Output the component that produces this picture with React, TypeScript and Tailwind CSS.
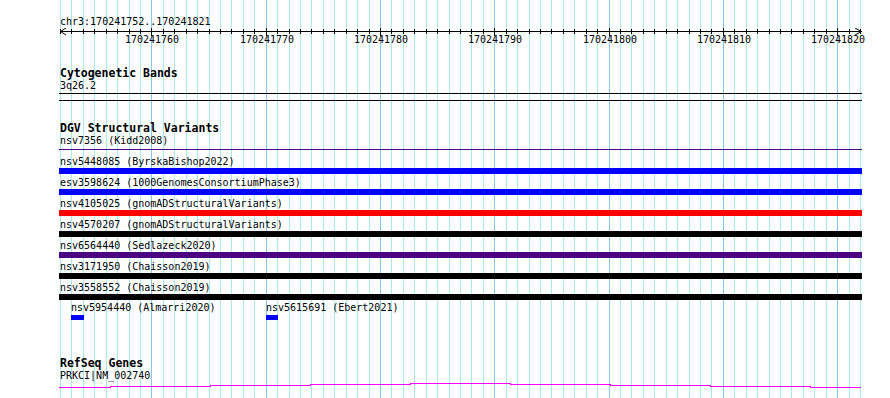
import React from "react";

const START = 170241752;
const BP = 800 / 70;
const xOf = (k: number) => Math.round(60 + k * BP);

const ticks = Array.from({ length: 71 }, (_, k) => ({
  k,
  x: xOf(k),
  major: (START + k) % 10 === 0,
}));

type Variant = { label: string; color: string };

const variants: Variant[] = [
  { label: "nsv5448085 (ByrskaBishop2022)", color: "bg-[#0000ff]" },
  { label: "esv3598624 (1000GenomesConsortiumPhase3)", color: "bg-[#0000ff]" },
  { label: "nsv4105025 (gnomADStructuralVariants)", color: "bg-[#ff0000]" },
  { label: "nsv4570207 (gnomADStructuralVariants)", color: "bg-black" },
  { label: "nsv6564440 (Sedlazeck2020)", color: "bg-[#4b0082]" },
  { label: "nsv3171950 (Chaisson2019)", color: "bg-black" },
  { label: "nsv3558552 (Chaisson2019)", color: "bg-black" },
];

// gene track wiggle: [x1, x2, row]
const wiggle: [number, number, number][] = [
  [59, 110, 5],
  [110, 210, 4],
  [210, 310, 3],
  [310, 410, 2],
  [410, 510, 1],
  [510, 610, 2],
  [610, 710, 3],
  [710, 810, 4],
  [810, 861, 5],
];

function Ruler() {
  return (
    <div className="relative h-[18px] w-[890px]">
      <svg width="890" height="8" className="block" shapeRendering="crispEdges">
        <line x1="60" y1="3.5" x2="862" y2="3.5" stroke="#000" />
        {ticks.map((t) => (
          <line
            key={t.k}
            x1={t.x + 0.5}
            x2={t.x + 0.5}
            y1={t.major ? 0 : 1}
            y2={t.major ? 8 : 6}
            stroke="#000"
          />
        ))}
        <polyline points="66,0 60.5,3.5 66,7" fill="none" stroke="#000" shapeRendering="auto" />
        <polyline points="855,0 861.5,3.5 855,7" fill="none" stroke="#000" shapeRendering="auto" />
      </svg>
      {ticks
        .filter((t) => t.major)
        .map((t) => (
          <div
            key={t.k}
            className="absolute top-[6px] h-[12px] w-[60px] text-center leading-[12px]"
            style={{ left: t.x - 29 }}
          >
            {START + t.k}
          </div>
        ))}
    </div>
  );
}

function TrackLabel({ children, h = "h-[14px] leading-[14px]" }: { children: React.ReactNode; h?: string }) {
  return <div className={`pl-[60px] text-[11.5px] font-bold ${h}`}>{children}</div>;
}

export default function App() {
  return (
    <div className="relative h-[398px] w-[890px] overflow-hidden bg-white font-['DejaVu_Sans_Mono','Liberation_Mono',monospace] text-[10px] text-black">
      {/* grid lines behind all tracks */}
      <div className="absolute inset-0">
        {ticks.map((t) => (
          <div
            key={t.k}
            className={`absolute top-0 h-full w-px ${t.major ? "bg-[#84c8e6]" : "bg-[#aae8ee]"}`}
            style={{ left: t.x }}
          />
        ))}
      </div>

      <div className="relative flex flex-col pt-[16px]">
        <div className="h-[12px] pl-[60px] leading-[12px]">chr3:170241752..170241821</div>
        <Ruler />

        {/* Cytogenetic Bands */}
        <div className="mt-[20px]">
          <TrackLabel>Cytogenetic Bands</TrackLabel>
          <div className="h-[12px] pl-[60px] leading-[12px]">3q26.2</div>
          <div className="ml-[59px] mt-[1px] h-[8px] w-[803px] border-y border-black" />
        </div>

        {/* DGV Structural Variants */}
        <div className="mt-[20px]">
          <TrackLabel>DGV Structural Variants</TrackLabel>
          <div className="h-[12px] pl-[60px] leading-[12px]">nsv7356 (Kidd2008)</div>
          <div className="ml-[59px] mt-[2px] h-px w-[803px] bg-[#4b0082]" />

          <div className="mt-[6px] flex flex-col gap-[3px]">
            {variants.map((v) => (
              <div key={v.label}>
                <div className="h-[12px] pl-[60px] leading-[12px] whitespace-pre">{v.label}</div>
                <div className={`ml-[59px] h-[6px] w-[803px] ${v.color}`} />
              </div>
            ))}
          </div>

          <div className="mt-[2px] flex pl-[71px]">
            <div className="flex w-[195px] flex-col gap-px">
              <div className="h-[12px] leading-[12px] whitespace-pre">nsv5954440 (Almarri2020)</div>
              <div className="h-[5px] w-[13px] bg-[#0000ff]" />
            </div>
            <div className="flex flex-col gap-px">
              <div className="h-[12px] leading-[12px] whitespace-pre">nsv5615691 (Ebert2021)</div>
              <div className="h-[5px] w-[12px] bg-[#0000ff]" />
            </div>
          </div>
        </div>

        {/* RefSeq Genes */}
        <div className="mt-[37px]">
          <TrackLabel h="h-[13px] leading-[13px]">RefSeq Genes</TrackLabel>
          <div className="h-[12px] pl-[60px] leading-[12px]">PRKCI|NM_002740</div>
          <svg width="890" height="8" className="block" shapeRendering="crispEdges">
            <path
              d={wiggle
                .map(([a, b, r], i) => `${i === 0 ? "M" : "L"}${a},${r + 0.5} L${b},${r + 0.5}`)
                .join(" ")}
              fill="none"
              stroke="#ff00ff"
            />
          </svg>
        </div>
      </div>
    </div>
  );
}
